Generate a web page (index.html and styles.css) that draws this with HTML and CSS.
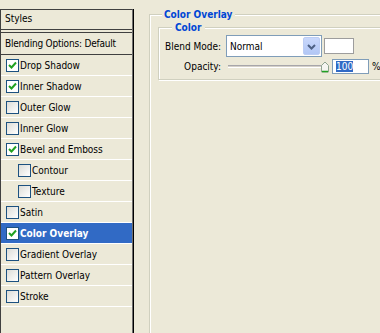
FILE: index.html
```html
<!DOCTYPE html>
<html>
<head>
<title>Layer Style</title>
<link rel="stylesheet" href="styles.css">
</head>
<body>
<div class="dialog">

  <div class="styles-list">
    <div class="list-head">Styles</div>
    <div class="list-blend">Blending Options: Default</div>
    <ul class="effects">
      <li><span class="check on"><svg viewBox="0 0 11 11"><path d="M2 5 L4.5 7.5 L9 2.5" /></svg></span>Drop Shadow</li>
      <li><span class="check on"><svg viewBox="0 0 11 11"><path d="M2 5 L4.5 7.5 L9 2.5" /></svg></span>Inner Shadow</li>
      <li><span class="check"></span>Outer Glow</li>
      <li><span class="check"></span>Inner Glow</li>
      <li><span class="check on"><svg viewBox="0 0 11 11"><path d="M2 5 L4.5 7.5 L9 2.5" /></svg></span>Bevel and Emboss</li>
      <li class="sub"><span class="check"></span>Contour</li>
      <li class="sub"><span class="check"></span>Texture</li>
      <li><span class="check"></span>Satin</li>
      <li class="active"><span class="check on"><svg viewBox="0 0 11 11"><path d="M2 5 L4.5 7.5 L9 2.5" /></svg></span>Color Overlay</li>
      <li><span class="check"></span>Gradient Overlay</li>
      <li><span class="check"></span>Pattern Overlay</li>
      <li><span class="check"></span>Stroke</li>
    </ul>
  </div>

  <div class="options">
    <fieldset class="group outer">
      <legend>Color Overlay</legend>
      <fieldset class="group inner">
        <legend>Color</legend>
        <div class="form-row">
          <label>Blend Mode:</label>
          <div class="select">
            <span class="select-value">Normal</span>
            <span class="select-btn"><svg viewBox="0 0 9 6"><path d="M1 1 L4.5 4.5 L8 1" /></svg></span>
          </div>
          <span class="swatch"></span>
        </div>
        <div class="form-row">
          <label>Opacity:</label>
          <div class="slider">
            <span class="track"></span>
            <svg class="thumb" viewBox="0 0 10 12"><path d="M1.5 4.5 L5 1 L8.5 4.5 L8.5 11 L1.5 11 Z" /><path class="thumb-base" d="M2 10.5 H8" /></svg>
          </div>
          <span class="num"><span class="num-sel">100</span></span>
          <span class="unit">%</span>
        </div>
      </fieldset>
    </fieldset>
  </div>

</div>
</body>
</html>
```

FILE: styles.css
```css
body {
    margin: 0;
    background-color: #ece9d8;
    font-family: "DejaVu Sans Condensed", "DejaVu Sans", sans-serif;
    font-size: 10px;
    color: #000;
    overflow: hidden;
}

.dialog {
    display: flex;
    align-items: flex-start;
    height: 333px;
}

/* left list */
.styles-list {
    width: 131px;
    height: 330px;
    flex: none;
    margin-top: 9px;
    border-top: 1px solid #404040;
    border-left: 1px solid #404040;
    border-right: 1px solid #6f6f6f;
    box-shadow: 1px 0 0 #000;
}

.list-head {
    height: 19px;
    line-height: 18px;
    padding-left: 4px;
    border-bottom: 1px solid #404040;
}

.list-blend {
    height: 21px;
    line-height: 21px;
    padding-left: 4px;
    margin-top: 2px;
    white-space: nowrap;
    letter-spacing: -0.2px;
    border-top: 1px solid #404040;
    border-bottom: 1px solid #404040;
}

.effects {
    list-style: none;
    margin: 0;
    padding: 0;
}

.effects li {
    display: flex;
    align-items: center;
    height: 20px;
    padding-left: 5px;
    border-bottom: 1px solid #fff;
}

.effects li.sub {
    padding-left: 17px;
}

.effects li.active {
    background-color: #316ac5;
    color: #fff;
    font-weight: bold;
}

.check {
    flex: none;
    width: 11px;
    height: 11px;
    margin-right: 1px;
    border: 1px solid #1c5180;
    background: linear-gradient(135deg, #dcdcd7, #fff);
}

.check.on {
    background: #fff;
}

.check svg {
    display: block;
    width: 11px;
    height: 11px;
}

.check svg path {
    fill: none;
    stroke: #21a121;
    stroke-width: 2;
}

/* right side */
.options {
    margin-left: 16px;
    padding-top: 8px;
}

.group {
    margin: 0;
    border: 1px solid #d0d0bf;
    box-shadow: inset 1px 1px 0 #fff, 1px 1px 0 #fff;
}

.group legend {
    color: #0046d5;
    font-weight: bold;
    font-size: 10px;
    line-height: 13px;
    background-color: #ece9d8;
}

.outer {
    width: 260px;
    height: 340px;
    padding: 0 0 0 8px;
}

.outer > legend {
    margin-left: 4px;
    padding: 0 3px 0 2px;
}

.inner {
    width: 240px;
    padding: 1px 0 4px 0;
}

.inner > legend {
    margin-left: 13px;
    padding: 0 4px 0 3px;
}

.form-row {
    display: flex;
    align-items: center;
}

.form-row + .form-row {
    margin-top: 1px;
    height: 17px;
}

.form-row label {
    width: 62px;
    margin-right: 5px;
    text-align: right;
}

.select {
    display: flex;
    align-items: center;
    width: 94px;
    height: 20px;
    border: 1px solid #7f9db9;
    background-color: #fff;
}

.select-value {
    flex: 1;
    padding-left: 3px;
}

.select-btn {
    width: 17px;
    height: 18px;
    margin-right: 1px;
    border-radius: 2px;
    background: linear-gradient(#c9d8fc, #b2c7f5);
    box-sizing: border-box;
    border: 1px solid #bccdf4;
}

.select-btn svg {
    display: block;
    width: 9px;
    height: 6px;
    margin: 6px auto 0;
}

.select-btn svg path {
    fill: none;
    stroke: #4d6185;
    stroke-width: 2;
}

.swatch {
    width: 28px;
    height: 14px;
    margin-left: 2px;
    border: 1px solid #9d9d9d;
    background-color: #fff;
}

.slider {
    display: flex;
    align-items: center;
    width: 104px;
}

.track {
    flex: 1;
    height: 1px;
    margin-left: 2px;
    border-top: 1px solid #a7a6aa;
    border-bottom: 1px solid #fff;
    background-color: #d4d0c8;
}

.thumb {
    width: 10px;
    height: 12px;
    margin-left: -2px;
}

.thumb path {
    fill: #f5f5f0;
    stroke: #8fa38f;
}

.thumb .thumb-base {
    stroke: #21a121;
    stroke-width: 1.5;
}

.num {
    width: 32px;
    height: 13px;
    margin-left: 2px;
    padding-left: 3px;
    border: 1px solid #7f9db9;
    background-color: #fff;
    line-height: 13px;
}

.num-sel {
    background-color: #316ac5;
    color: #fff;
}

.unit {
    margin-left: 3px;
}
```
